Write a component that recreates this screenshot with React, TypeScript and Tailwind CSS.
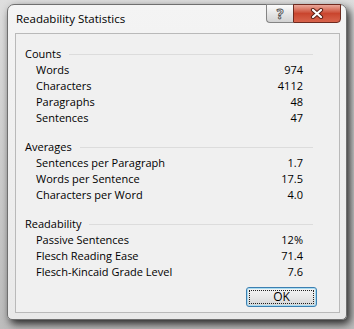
import React from 'react';

type Row = [string, string];

const sections: { title: string; rows: Row[] }[] = [
  {
    title: 'Counts',
    rows: [
      ['Words', '974'],
      ['Characters', '4112'],
      ['Paragraphs', '48'],
      ['Sentences', '47'],
    ],
  },
  {
    title: 'Averages',
    rows: [
      ['Sentences per Paragraph', '1.7'],
      ['Words per Sentence', '17.5'],
      ['Characters per Word', '4.0'],
    ],
  },
  {
    title: 'Readability',
    rows: [
      ['Passive Sentences', '12%'],
      ['Flesch Reading Ease', '71.4'],
      ['Flesch-Kincaid Grade Level', '7.6'],
    ],
  },
];

function CloseGlyph() {
  return (
    <svg width="14" height="11" viewBox="0 0 14 11">
      <path d="M3 2 L11 9 M11 2 L3 9" stroke="#5b2117" strokeWidth="4.2" strokeLinecap="round" />
      <path d="M3 2 L11 9 M11 2 L3 9" stroke="#ffffff" strokeWidth="2.2" strokeLinecap="round" />
    </svg>
  );
}

export default function App() {
  return (
    <div
      className="w-[354px] h-[329px] overflow-hidden bg-gradient-to-b from-[#dedede] to-[#bdbdbd] pl-[7px] pt-[4px]"
      style={{ fontFamily: '"Segoe UI", "Open Sans", sans-serif' }}
    >
      <div className="w-[340px] h-[316px] flex flex-col rounded-t-[7px] rounded-b-[5px] border border-[#6f6f6f] bg-gradient-to-b from-[#f4f4f4] to-[#e9e9e9] shadow-[3px_4px_8px_rgba(0,0,0,0.8)]">
        {/* title bar */}
        <div className="h-[28px] flex justify-between items-start">
          <div className="pl-[8px] h-[28px] flex items-center text-[11.5px] text-black">
            Readability Statistics
          </div>
          <div className="flex mr-[5px] -mt-px">
            <div className="w-[27px] h-[19px] flex items-center justify-center border border-[#848484] border-r-0 rounded-bl-[4px] bg-gradient-to-b from-[#fbfbfb] via-[#e6e6e6] to-[#d2d2d2]">
              <span className="text-[14px] font-bold leading-none text-[#f7f7f7] [-webkit-text-stroke:0.9px_#555555]">?</span>
            </div>
            <div className="w-[48px] h-[19px] flex items-center justify-center border border-[#6e2a1f] rounded-br-[4px] bg-gradient-to-b from-[#e9a89b] via-[#c9452e] to-[#d8644c]">
              <CloseGlyph />
            </div>
          </div>
        </div>

        {/* client area */}
        <div className="ml-[7px] mr-[6px] mb-[6px] flex-1 flex flex-col border border-[#b9b9b9] bg-[#f0f0f0] text-[11px] text-black leading-[16px]">
          <div className="pl-[9px] pr-[26px] pt-[12px] flex flex-col gap-[13px]">
            {sections.map((s) => (
              <div key={s.title} className="flex flex-col">
                <div className="h-[16px] flex items-center gap-[8px]">
                  <span>{s.title}</span>
                  <div className="flex-1 h-px bg-[#dcdcdc]" />
                </div>
                {s.rows.map(([label, value]) => (
                  <div key={label} className="h-[16px] flex justify-between pl-[11px] pr-[10px]">
                    <span>{label}</span>
                    <span>{value}</span>
                  </div>
                ))}
              </div>
            ))}
          </div>
          <div className="flex justify-end pr-[22px] mt-[7px]">
            <div className="w-[71px] h-[20px] p-[2px] rounded-[3px] border border-[#3c7fb1] bg-gradient-to-b from-[#f4f4f4] via-[#e8e8e8] to-[#d6d6d6] shadow-[inset_0_0_0_1px_#a9dcf2]">
              <div className="w-full h-full flex items-center justify-center border border-dotted border-[#202020] text-[12px]">
                OK
              </div>
            </div>
          </div>
        </div>
      </div>
    </div>
  );
}
